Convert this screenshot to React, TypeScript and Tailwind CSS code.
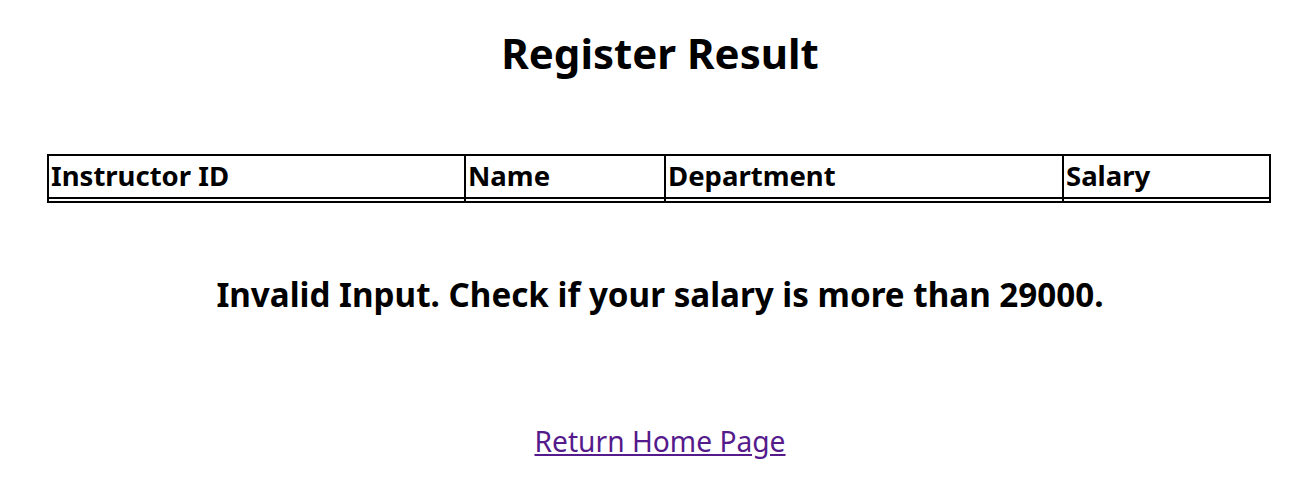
export default function App() {
  const headers = [
    { label: "Instructor ID", w: "w-[417px]" },
    { label: "Name", w: "w-[200px]" },
    { label: "Department", w: "w-[398px]" },
    { label: "Salary", w: "w-[207px]" },
  ];

  return (
    <div className="h-[482px] w-full bg-white text-black [font-family:'Noto_Sans',sans-serif]">
      <h1 className="pl-[24px] pt-[28px] text-center text-[42px] font-bold leading-[50px]">
        Register Result
      </h1>

      <table className="ml-[47px] mt-[76px] w-[1224px] table-fixed border-separate border-spacing-0 border border-black">
        <thead>
          <tr>
            {headers.map((h) => (
              <th
                key={h.label}
                className={`${h.w} border border-black px-[2px] pt-0 pb-[2px] text-left text-[27.5px] font-bold leading-[39px]`}
              >
                {h.label}
              </th>
            ))}
          </tr>
        </thead>
        <tbody>
          <tr>
            {headers.map((h) => (
              <td key={h.label} className="border border-black p-px" />
            ))}
          </tr>
        </tbody>
      </table>

      <p className="mt-[72px] pl-[24px] text-center text-[33.2px] font-bold leading-[40px]">
        Invalid Input. Check if your salary is more than 29000.
      </p>

      <div className="mt-[106px] pl-[24px] text-center text-[28.2px] leading-[40px]">
        <a href="#" className="text-[#551a8b] underline">
          Return Home Page
        </a>
      </div>
    </div>
  );
}
